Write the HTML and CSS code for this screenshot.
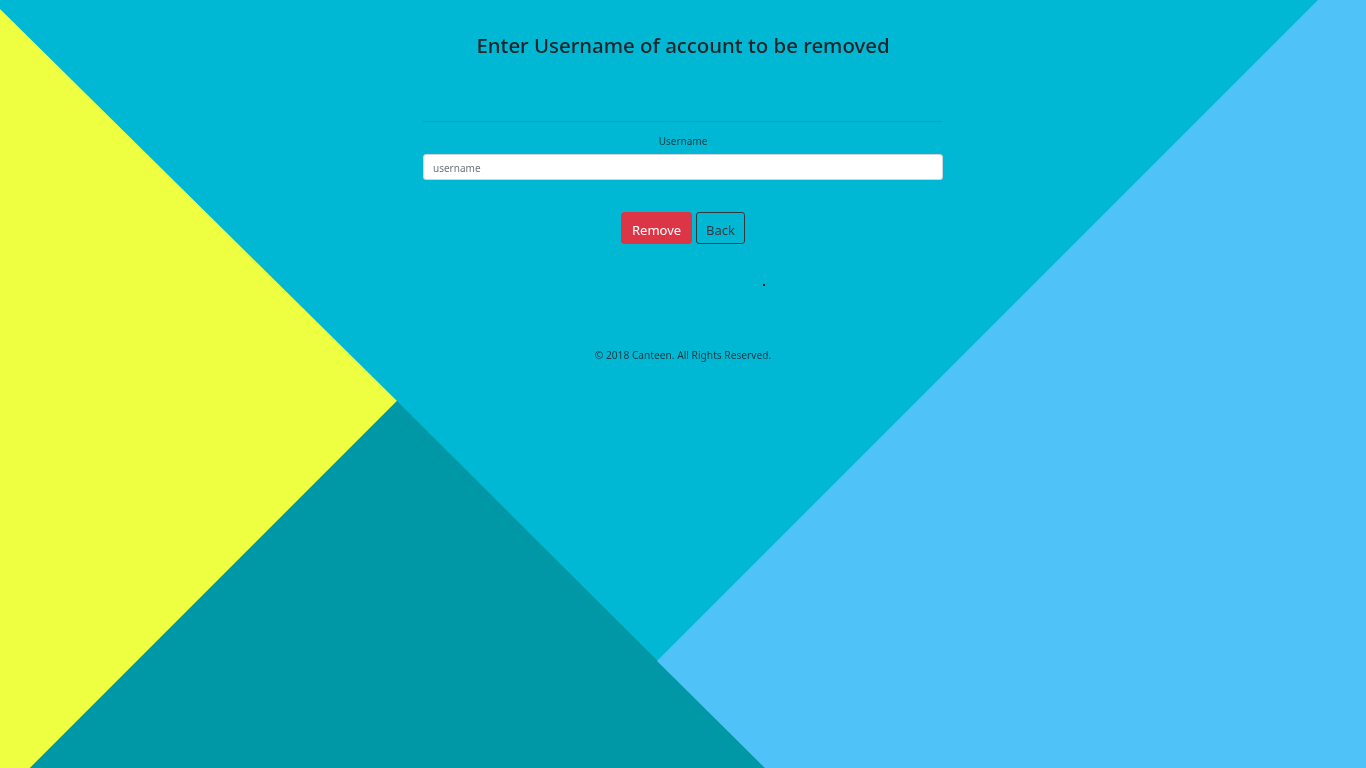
FILE: index.html
```html
<!DOCTYPE html>
<html lang="en">
<head>
<meta charset="utf-8">
<title>Remove account</title>
<link rel="stylesheet" href="styles.css">
</head>
<body>
<svg class="bg" viewBox="0 0 1366 768" preserveAspectRatio="none" aria-hidden="true">
  <rect x="0" y="0" width="1366" height="768" fill="#00b8d4"/>
  <polygon points="0,9 397,401 30,768 0,768" fill="#eeff41"/>
  <polygon points="397,401 765,768 30,768" fill="#0097a7"/>
  <polygon points="1318,0 1366,0 1366,768 765,768 657,661" fill="#4fc3f7"/>
</svg>
<main class="page">
  <h1 class="title">Enter Username of account to be removed</h1>
  <form class="form">
    <hr class="rule">
    <label class="label" for="username">Username</label>
    <input class="input" id="username" type="text" placeholder="username">
    <div class="actions">
      <button type="button" class="btn btn-danger">Remove</button>
      <button type="button" class="btn btn-outline">Back</button>
    </div>
  </form>
  <div class="dot-row"><span class="dot"></span></div>
  <footer class="footer">© 2018 Canteen. All Rights Reserved.</footer>
</main>
</body>
</html>
```
FILE: styles.css
```css
html, body {
  margin: 0;
  padding: 0;
  height: 100%;
}
body {
  font-family: "Noto Sans", "Open Sans", sans-serif;
  color: #212529;
  background: #00b8d4;
  overflow: hidden;
}
.bg {
  position: fixed;
  inset: 0;
  width: 100%;
  height: 100%;
  z-index: 0;
}
.page {
  position: relative;
  z-index: 1;
  display: flex;
  flex-direction: column;
  align-items: center;
  padding-top: 31px;
}
.title {
  margin: 0;
  font-size: 20.4px;
  font-weight: 500;
  line-height: 28px;
  color: #212529;
}
.form {
  width: 520px;
  display: flex;
  flex-direction: column;
  align-items: stretch;
  margin-top: 62px;
}
.rule {
  margin: 0;
  border: 0;
  border-top: 1px solid rgba(0, 0, 0, 0.1);
}
.label {
  text-align: center;
  font-size: 10px;
  line-height: 14px;
  margin-top: 12px;
  margin-bottom: 6px;
  color: #1d3a44;
}
.input {
  box-sizing: border-box;
  height: 26px;
  border: 1px solid #ced4da;
  border-radius: 3px;
  background: #fff;
  padding: 2px 9px 0;
  font-family: inherit;
  font-size: 10px;
  color: #495057;
  outline: none;
}
.input::placeholder {
  color: #6c757d;
}
.actions {
  display: flex;
  justify-content: center;
  gap: 4px;
  margin-top: 32px;
}
.btn {
  box-sizing: border-box;
  height: 32px;
  padding: 3px 10px 0;
  border-radius: 3px;
  font-family: inherit;
  font-size: 13px;
  cursor: pointer;
}
.btn-danger {
  background: #dc3545;
  border: 1px solid #dc3545;
  color: #fff;
  font-size: 13px;
}
.btn-outline {
  background: transparent;
  border: 1px solid #343a40;
  color: #343a40;
  padding-left: 9px;
  padding-right: 9px;
}
.dot-row {
  width: 520px;
  display: flex;
  justify-content: flex-end;
  padding-right: 178px;
  box-sizing: border-box;
  margin-top: 40px;
}
.dot {
  width: 2px;
  height: 2px;
  background: #111;
}
.footer {
  margin-top: 62px;
  font-size: 10.2px;
  line-height: 14px;
  color: #1d3a44;
}
```
